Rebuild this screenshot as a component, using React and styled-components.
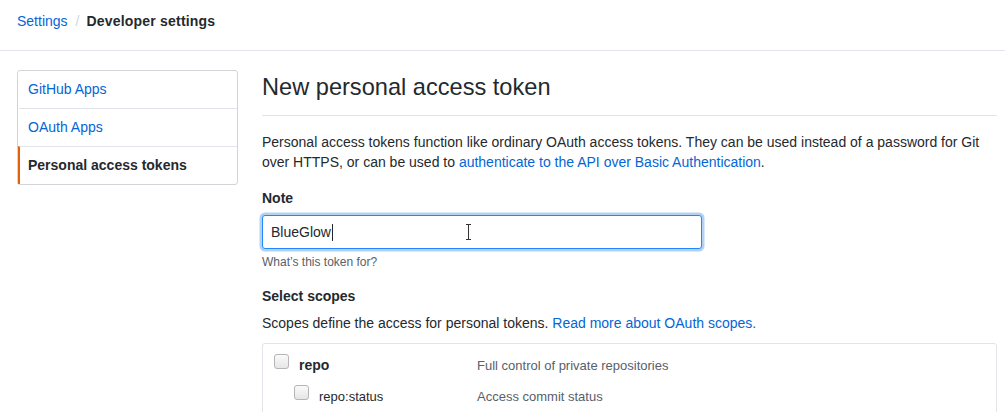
import styled, { createGlobalStyle } from "styled-components";

const GlobalStyle = createGlobalStyle`
    body {
        margin: 0;
        background: #fff;
        font-family: "Liberation Sans", Helvetica, Arial, sans-serif;
        font-size: 14px;
        line-height: 1.5;
        color: #24292e;
    }
    a {
        color: #0366d6;
        text-decoration: none;
    }
`;

const scopes = [
    { name: "repo", desc: "Full control of private repositories", bold: true, depth: 0 },
    { name: "repo:status", desc: "Access commit status", bold: false, depth: 1 },
];

const App = () => {
    return (
        <Page>
            <GlobalStyle />
            <Header>
                <Crumb href="#">Settings</Crumb>
                <Sep>/</Sep>
                <Current>Developer settings</Current>
            </Header>
            <Layout>
                <Menu>
                    <MenuItem href="#">GitHub Apps</MenuItem>
                    <MenuItem href="#">OAuth Apps</MenuItem>
                    <MenuItem href="#" $selected>
                        Personal access tokens
                    </MenuItem>
                </Menu>
                <Main>
                    <Title>New personal access token</Title>
                    <Intro>
                        Personal access tokens function like ordinary OAuth access tokens. They can be
                        used instead of a password for Git over HTTPS, or can be used to{" "}
                        <a href="#">authenticate to the API over Basic Authentication</a>.
                    </Intro>
                    <Label>Note</Label>
                    <InputWrap>
                        <Input defaultValue="BlueGlow" />
                        <Caret />
                        <IBeam />
                    </InputWrap>
                    <Hint>What’s this token for?</Hint>
                    <Label $top={15}>Select scopes</Label>
                    <Intro $top={7}>
                        Scopes define the access for personal tokens.{" "}
                        <a href="#">Read more about OAuth scopes.</a>
                    </Intro>
                    <ScopeBox>
                        {scopes.map((s) => (
                            <ScopeRow key={s.name}>
                                <ScopeName $depth={s.depth}>
                                    <Check />
                                    <ScopeLabel $bold={s.bold}>{s.name}</ScopeLabel>
                                </ScopeName>
                                <ScopeDesc>{s.desc}</ScopeDesc>
                            </ScopeRow>
                        ))}
                    </ScopeBox>
                </Main>
            </Layout>
        </Page>
    );
};

const Page = styled.div`
    width: 1005px;
    height: 412px;
    overflow: hidden;
`;
const Header = styled.div`
    display: flex;
    align-items: center;
    height: 51px;
    padding: 0 17px 7px;
    border-bottom: 1px solid #e1e4e8;
    box-sizing: border-box;
    font-size: 14px;
`;
const Crumb = styled.a`
    font-size: 14px;
`;
const Sep = styled.span`
    color: #d1d5da;
    margin: 0 7px 0 8px;
`;
const Current = styled.span`
    font-weight: bold;
    font-size: 14px;
    letter-spacing: 0.2px;
`;
const Layout = styled.div`
    display: grid;
    grid-template-columns: 221px 735px;
    gap: 24px;
    padding: 19px 0 0 17px;
`;
const Menu = styled.nav`
    align-self: start;
    display: flex;
    flex-direction: column;
    border: 1px solid #d1d5da;
    border-radius: 3px;
`;
const MenuItem = styled.a`
    display: block;
    height: 38px;
    line-height: 36px;
    padding: 0 8px;
    box-sizing: border-box;
    border-top: 1px solid #e1e4e8;
    border-left: 2px solid ${(p) => (p.$selected ? "#e36209" : "transparent")};
    color: ${(p) => (p.$selected ? "#24292e" : "#0366d6")};
    font-weight: ${(p) => (p.$selected ? "bold" : "normal")};
    &:first-child {
        border-top: 0;
        height: 37px;
    }
`;
const Main = styled.div`
    display: flex;
    flex-direction: column;
`;
const Title = styled.h2`
    margin: 0;
    padding: 2px 0 13px;
    font-size: 23.6px;
    font-weight: normal;
    line-height: 30px;
    border-bottom: 1px solid #e1e4e8;
`;
const Intro = styled.p`
    margin: ${(p) => p.$top ?? 16}px 0 0;
    line-height: 20px;
`;
const Label = styled.div`
    margin-top: ${(p) => p.$top ?? 16}px;
    font-weight: bold;
    line-height: 20px;
`;
const InputWrap = styled.div`
    position: relative;
    width: 440px;
    margin-top: 7px;
`;
const Input = styled.input`
    box-sizing: border-box;
    width: 440px;
    height: 34px;
    padding: 6px 8px;
    font-family: inherit;
    font-size: 14px;
    color: #24292e;
    border: 1px solid #2188ff;
    border-radius: 3px;
    box-shadow: 0 0 0 2.5px rgba(3, 102, 214, 0.3);
    outline: none;
`;
const Caret = styled.span`
    position: absolute;
    left: 70px;
    top: 9px;
    width: 1px;
    height: 17px;
    background: #24292e;
`;
const IBeam = styled.span`
    position: absolute;
    left: 204px;
    top: 9px;
    width: 5px;
    height: 16px;
    border-top: 1px solid #333;
    border-bottom: 1px solid #333;
    box-sizing: border-box;
    &::after {
        content: "";
        position: absolute;
        left: 2px;
        top: 0;
        width: 1px;
        height: 14px;
        background: #333;
    }
`;
const Hint = styled.div`
    margin-top: 4px;
    font-size: 12px;
    line-height: 18px;
    color: #586069;
`;
const ScopeBox = styled.div`
    margin-top: 10px;
    border: 1px solid #e1e4e8;
    border-radius: 3px;
    padding: 6px 0;
`;
const ScopeRow = styled.div`
    display: grid;
    grid-template-columns: 214px 1fr;
    height: 31px;
    align-items: center;
`;
const ScopeName = styled.label`
    display: flex;
    align-items: center;
    padding-left: ${(p) => 11 + p.$depth * 20}px;
`;
const Check = styled.span`
    width: 15px;
    height: 15px;
    box-sizing: border-box;
    border: 1px solid #b5b5b5;
    border-radius: 3px;
    background: linear-gradient(#fafafa, #e6e6e6);
    margin-right: 10px;
    margin-top: -8px;
`;
const ScopeLabel = styled.span`
    font-weight: ${(p) => (p.$bold ? "bold" : "normal")};
    font-size: ${(p) => (p.$bold ? 14 : 13)}px;
    color: #24292e;
`;
const ScopeDesc = styled.span`
    font-size: 13px;
    color: #586069;
`;

export default App;
